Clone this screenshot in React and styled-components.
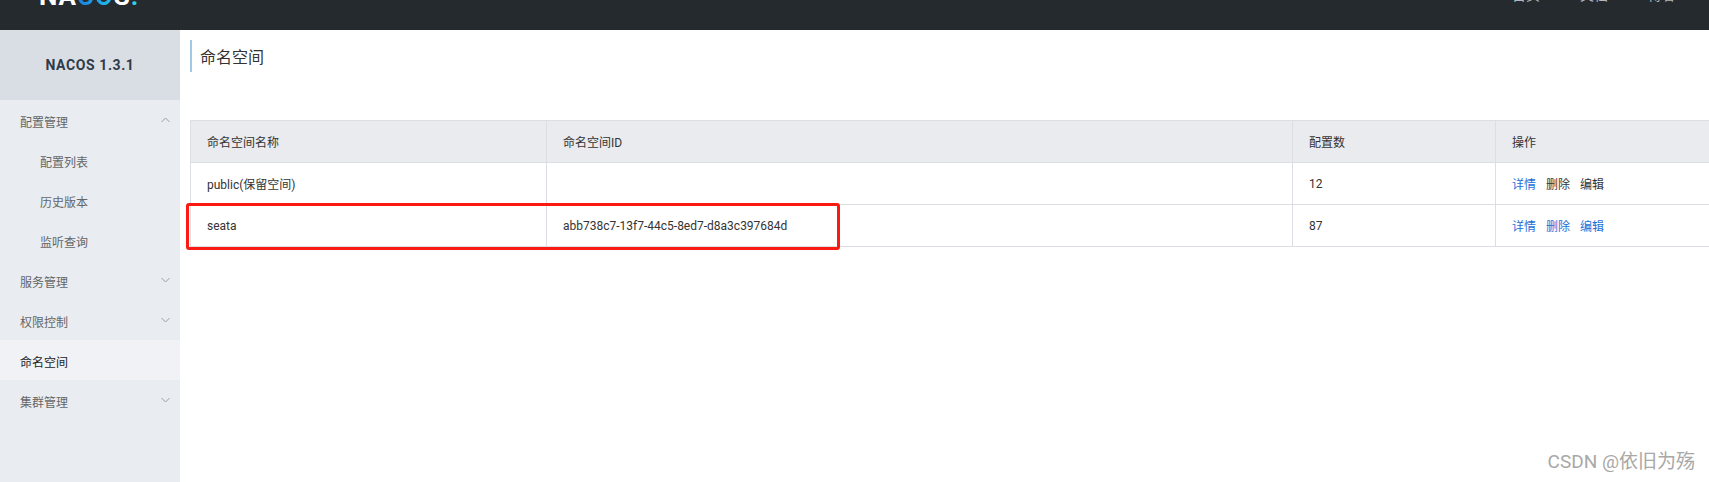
import React from 'react';
import styled, { createGlobalStyle } from 'styled-components';

const Global = createGlobalStyle`
  html, body {
    margin: 0;
    padding: 0;
    height: 482px;
    overflow: hidden;
    background: #fff;
    font-family: Roboto, "Noto Sans CJK SC", sans-serif;
    font-size: 12px;
    color: #333;
  }
`;

const menu = [
  { name: '配置管理', arrow: 'up' },
  { name: '配置列表', sub: true },
  { name: '历史版本', sub: true },
  { name: '监听查询', sub: true },
  { name: '服务管理', arrow: 'down' },
  { name: '权限控制', arrow: 'down' },
  { name: '命名空间', active: true },
  { name: '集群管理', arrow: 'down' },
];

const rows = [
  { name: 'public(保留空间)', id: '', count: 12 },
  { name: 'seata', id: 'abb738c7-13f7-44c5-8ed7-d8a3c397684d', count: 87, blue: true },
];

function Chevron({ dir }) {
  return (
    <Arrow width="9" height="6" viewBox="0 0 9 6" fill="none" stroke="#9a9ea6" strokeWidth="1">
      <path d={dir === 'up' ? 'M0.5 5L4.5 1L8.5 5' : 'M0.5 1L4.5 5L8.5 1'} />
    </Arrow>
  );
}

export default function App() {
  return (
    <Page>
      <Global />
      <Header>
        <Logo>NA<Blue>CO</Blue>S<Dot>.</Dot></Logo>
        <Nav>
          <NavItem>首页</NavItem>
          <NavItem>文档</NavItem>
          <NavItem>博客</NavItem>
        </Nav>
      </Header>
      <Body>
        <Sidebar>
          <Version>NACOS 1.3.1</Version>
          {menu.map(item => (
            <MenuItem key={item.name} $sub={item.sub} $active={item.active}>
              {item.name}
              {item.arrow && <Chevron dir={item.arrow} />}
            </MenuItem>
          ))}
        </Sidebar>
        <Main>
          <Title>命名空间</Title>
          <TableWrap>
            <Table>
              <colgroup>
                <col style={{ width: 356 }} />
                <col style={{ width: 746 }} />
                <col style={{ width: 203 }} />
                <col style={{ width: 226 }} />
              </colgroup>
              <thead>
                <tr>
                  <Th>命名空间名称</Th>
                  <Th>命名空间ID</Th>
                  <Th>配置数</Th>
                  <Th>操作</Th>
                </tr>
              </thead>
              <tbody>
                {rows.map(row => (
                  <tr key={row.name}>
                    <Td>{row.name}</Td>
                    <Td>{row.id}</Td>
                    <Td>{row.count}</Td>
                    <Td>
                      <Action $blue>详情</Action>
                      <Action $blue={row.blue}>删除</Action>
                      <Action $blue={row.blue}>编辑</Action>
                    </Td>
                  </tr>
                ))}
              </tbody>
            </Table>
            <Highlight />
          </TableWrap>
        </Main>
      </Body>
      <Watermark>CSDN @依旧为殇</Watermark>
    </Page>
  );
}

const Page = styled.div`
  position: relative;
  width: 1709px;
  height: 482px;
  overflow: hidden;
`;
const Header = styled.header`
  height: 30px;
  background: #252a2f;
  display: flex;
  justify-content: space-between;
  align-items: flex-end;
  overflow: hidden;
  padding: 0 33px 0 39px;
`;
const Logo = styled.div`
  font-size: 26px;
  font-weight: bold;
  line-height: 30px;
  color: #fff;
  letter-spacing: 1px;
  margin-bottom: 19px;
`;
const Blue = styled.span`
  background: linear-gradient(90deg, #1a7fe0, #22c0ea);
  -webkit-background-clip: text;
  background-clip: text;
  color: transparent;
`;
const Dot = styled.span`
  color: #2fd0e6;
`;
const Nav = styled.nav`
  display: flex;
  gap: 40px;
  margin-bottom: 25px;
`;
const NavItem = styled.span`
  font-size: 14px;
  line-height: 20px;
  color: #b4b6b8;
`;
const Body = styled.div`
  display: flex;
  height: 452px;
`;
const Sidebar = styled.aside`
  width: 180px;
  flex-shrink: 0;
  background: #e9ecf1;
`;
const Version = styled.div`
  height: 70px;
  background: #d9dee4;
  display: flex;
  align-items: center;
  justify-content: center;
  font-size: 14px;
  font-weight: bold;
  letter-spacing: 0.6px;
  color: #303a48;
`;
const MenuItem = styled.div`
  position: relative;
  height: 40px;
  line-height: 46px;
  padding-left: ${p => (p.$sub ? 40 : 20)}px;
  font-size: 12px;
  color: ${p => (p.$active ? '#222' : '#666')};
  background: ${p => (p.$active ? '#f0f2f6' : 'transparent')};
`;
const Arrow = styled.svg`
  position: absolute;
  right: 10px;
  top: 17px;
`;
const Main = styled.main`
  flex: 1;
  padding: 10px 0 0 10px;
  overflow: hidden;
`;
const Title = styled.h1`
  margin: 0;
  height: 32px;
  line-height: 36px;
  border-left: 2px solid #a3c8e6;
  padding-left: 8px;
  font-size: 16px;
  font-weight: normal;
  color: #333;
`;
const TableWrap = styled.div`
  position: relative;
  margin-top: 48px;
  width: 1531px;
`;
const Table = styled.table`
  border-collapse: collapse;
  table-layout: fixed;
  width: 1531px;
`;
const Th = styled.th`
  height: 41px;
  padding: 0 16px;
  background: #e9ebef;
  border: 1px solid #dcdee3;
  font-weight: normal;
  text-align: left;
  color: #333;
`;
const Td = styled.td`
  height: 41px;
  padding: 0 16px;
  border: 1px solid #dcdee3;
  color: #333;
`;
const Action = styled.a`
  margin-right: 10px;
  color: ${p => (p.$blue ? '#1f6fd6' : '#333')};
`;
const Highlight = styled.div`
  position: absolute;
  left: -4px;
  top: 83px;
  width: 654px;
  height: 47px;
  box-sizing: border-box;
  border: 3px solid #fb1a12;
  border-radius: 3px;
`;
const Watermark = styled.div`
  position: absolute;
  right: 14px;
  bottom: 8px;
  font-size: 19px;
  line-height: 24px;
  color: #a8a8a8;
`;
